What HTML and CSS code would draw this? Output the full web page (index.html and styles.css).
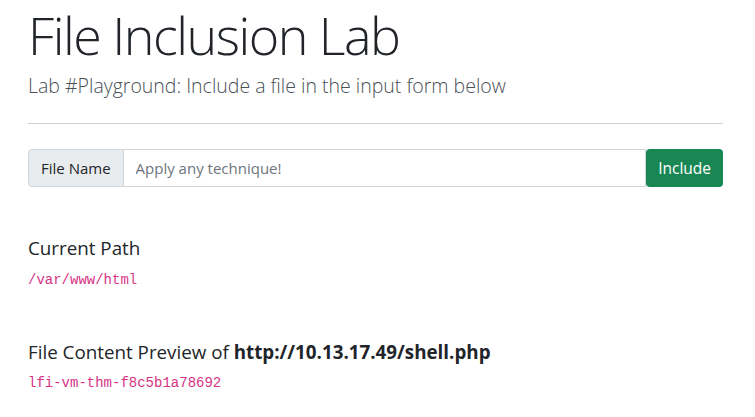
FILE: index.html
```html
<!DOCTYPE html>
<html>
<head>
<meta charset="utf-8">
<link rel="stylesheet" href="styles.css">
</head>
<body>
<div class="container">
  <h1 class="display">File Inclusion Lab</h1>
  <p class="lead">Lab #Playground: Include a file in the input form below</p>
  <hr class="rule">
  <form class="input-group">
    <span class="addon">File Name</span>
    <input class="field" type="text" placeholder="Apply any technique!">
    <button class="btn" type="button">Include</button>
  </form>
  <h5 class="section-title">Current Path</h5>
  <code class="code">/var/www/html</code>
  <h5 class="section-title second">File Content Preview of <b>http://10.13.17.49/shell.php</b></h5>
  <code class="code">lfi-vm-thm-f8c5b1a78692</code>
</div>
</body>
</html>
```
FILE: styles.css
```css
* { box-sizing: border-box; }
body {
  margin: 0;
  font-family: "Open Sans", "Noto Sans", sans-serif;
  color: #212529;
  background: #fff;
}
.container {
  padding: 0 32px 0 28px;
}
.display {
  margin: 0;
  padding-top: 4px;
  font-size: 52px;
  font-weight: 300;
  line-height: 1.2;
  letter-spacing: -1.5px;
}
.lead {
  margin: 6px 0 0;
  font-size: 19.5px;
  line-height: 27px;
  font-weight: 300;
  color: #495057;
}
.rule {
  margin: 24px 0 25px;
  border: 0;
  border-top: 1px solid #cfd1d3;
}
.input-group {
  display: flex;
  height: 38px;
}
.addon {
  display: flex;
  align-items: center;
  padding: 0 12px;
  background: #e9ecef;
  border: 1px solid #ced4da;
  border-radius: 4px 0 0 4px;
  font-size: 15px;
}
.field {
  flex: 1;
  min-width: 0;
  border: 1px solid #ced4da;
  border-left: 0;
  padding: 0 12px;
  font-family: inherit;
  font-size: 15px;
  color: #212529;
}
.field::placeholder { color: #6c757d; }
.btn {
  border: 0;
  background: #198754;
  color: #fff;
  border-radius: 4px;
  padding: 0 12px;
  font-family: inherit;
  font-size: 15.5px;
}
.section-title {
  margin: 50px 0 10px;
  font-size: 18.8px;
  line-height: 23px;
  font-weight: 400;
}
.section-title.second { margin-top: 50px; margin-bottom: 9px; }
.section-title b { font-weight: 700; }
.code {
  display: block;
  font-family: "Liberation Mono", monospace;
  font-size: 14px;
  line-height: 21px;
  color: #d63384;
}
```
